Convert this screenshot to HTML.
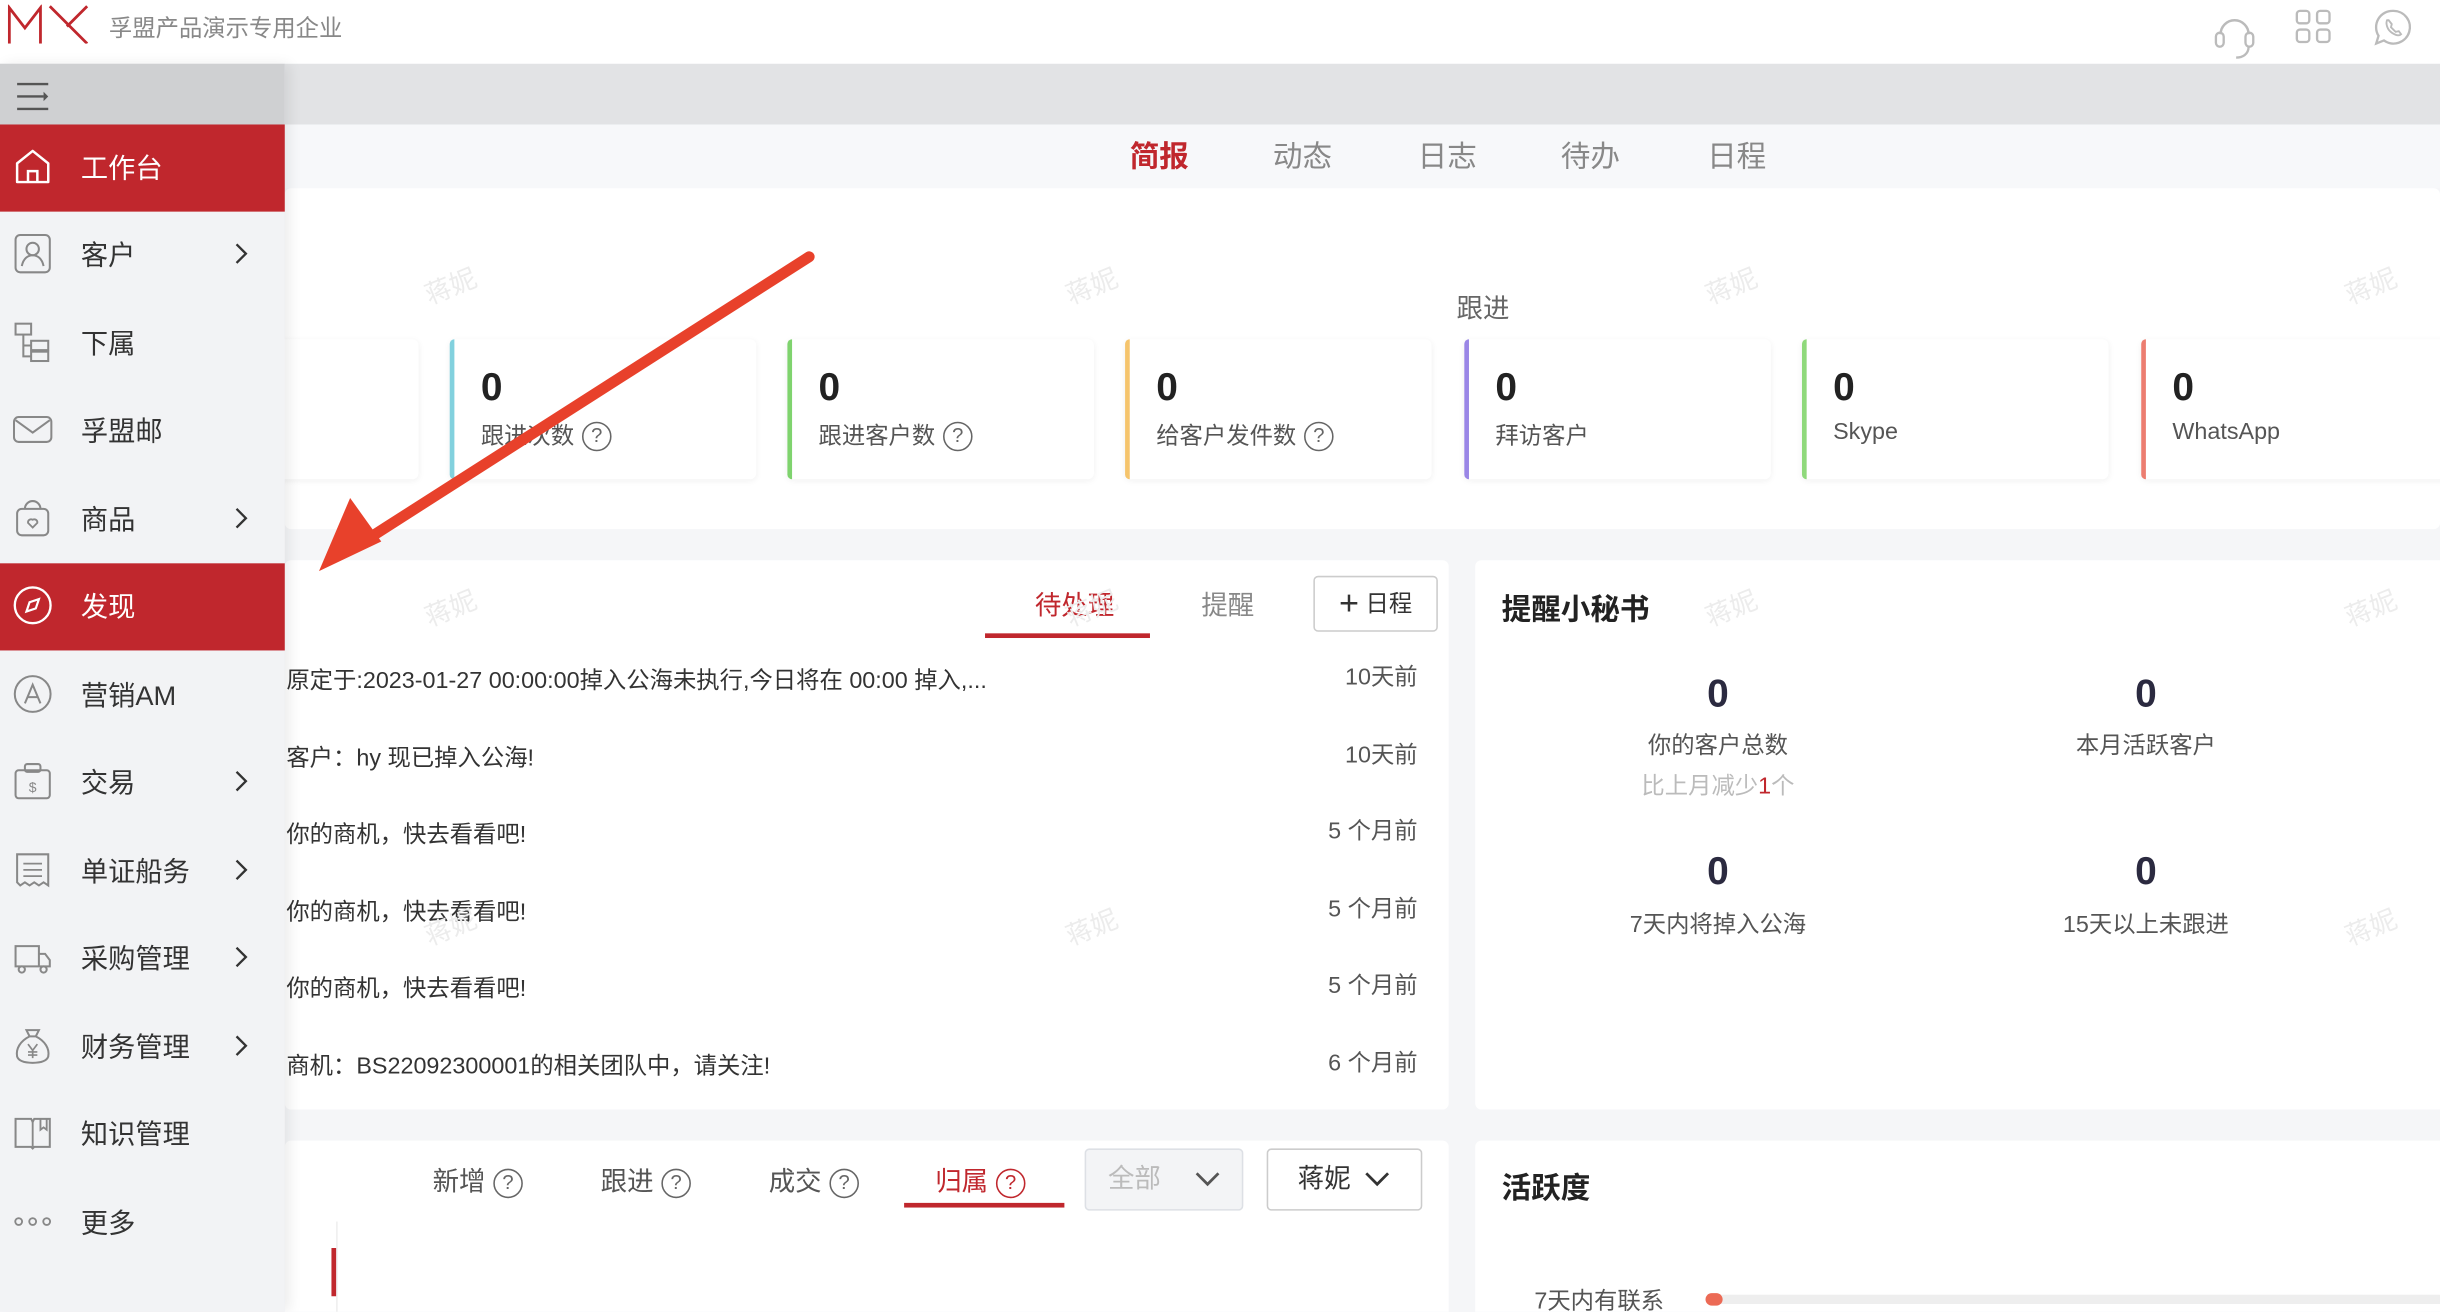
<!DOCTYPE html>
<html><head><meta charset="utf-8">
<style>
*{margin:0;padding:0;box-sizing:border-box}
html,body{width:2440px;height:1312px;overflow:hidden;background:#f5f6f8}
body{font-family:"Liberation Sans","Noto Sans CJK SC",sans-serif;color:#333}
#w{position:absolute;left:0;top:0;width:1568px;height:843px;transform:scale(1.556122);transform-origin:0 0;background:#f5f6f8;overflow:hidden}
.a{position:absolute}
.hdr{left:0;top:0;width:1568px;height:41px;background:#fff}
.gbar{left:0;top:41px;width:1568px;height:39px;background:#e2e3e5}
.tabs{left:183px;top:80px;width:1385px;height:41px;background:#f7f8fa}
.tab{position:absolute;top:86px;font-size:19px;color:#888}
.panel{background:#fff;border-radius:4px}
.card{position:absolute;top:218px;height:90px;width:197px;background:#fff;border-radius:4px;box-shadow:0 1px 4px rgba(0,0,0,.06)}
.card .bd{position:absolute;left:0;top:0;bottom:0;width:3px;border-radius:3px 0 0 3px}
.card .n{position:absolute;left:20px;top:17px;font-size:25px;font-weight:bold;color:#222}
.card .l{position:absolute;left:20px;top:51px;font-size:15px;color:#555}
.q{display:inline-block;width:19px;height:19px;border:1.3px solid #666;border-radius:50%;font-size:13px;line-height:16px;text-align:center;vertical-align:1px;margin-left:5px;color:#666}
.side{left:0;top:41px;width:183px;height:802px;background:#f2f3f5;box-shadow:3px 0 8px rgba(0,0,0,.08)}
.sbar{left:0;top:41px;width:183px;height:39px;background:#cfd0d2}
.it{position:absolute;left:0;width:183px;height:56px}
.it .t{position:absolute;left:52px;top:15px;font-size:17.5px;color:#333}
.it .ic{position:absolute;left:8px;top:14px;width:26px;height:26px}
.it .ch{position:absolute;left:150px;top:18px;width:10px;height:18px}
.it.on{background:#c0272d}
.it.on .t{color:#fff}
.row{position:absolute;left:184px;font-size:15px;color:#333;white-space:nowrap}
.tm{position:absolute;right:657px;font-size:15px;color:#555;text-align:right;width:120px}
.wm{position:absolute;font-size:17px;color:#ececec;transform:rotate(-22deg)}
.ctr{position:absolute;text-align:center;width:240px}
</style></head><body>
<div id="w">
<div class="a hdr"></div>
<svg class="a" style="left:5px;top:3px" width="52" height="25" viewBox="0 0 52 25"><path d="M1 25V2l10 13 10-13v23" fill="none" stroke="#c0272d" stroke-width="1.8"/><path d="M27 1l24 24M51 1L38 14" fill="none" stroke="#c0272d" stroke-width="1.8"/></svg>
<div class="a" style="left:70px;top:7px;font-size:15px;color:#888">孚盟产品演示专用企业</div>
<svg class="a" style="left:1422px;top:4px" width="28" height="40" viewBox="0 0 28 40"><path d="M5 18a9 9 0 0 1 18 0" fill="none" stroke="#bbb" stroke-width="1.6"/><rect x="2" y="17" width="5" height="9" rx="2.5" fill="none" stroke="#bbb" stroke-width="1.5"/><rect x="21" y="17" width="5" height="9" rx="2.5" fill="none" stroke="#bbb" stroke-width="1.5"/><path d="M23 26c0 5-4 7-8 7" fill="none" stroke="#bbb" stroke-width="1.5"/></svg>
<svg class="a" style="left:1474px;top:5px" width="26" height="36" viewBox="0 0 26 36"><rect x="2" y="2" width="8" height="8" rx="2" fill="none" stroke="#bbb" stroke-width="1.5"/><rect x="15" y="2" width="8" height="8" rx="2" fill="none" stroke="#bbb" stroke-width="1.5"/><rect x="2" y="14" width="8" height="8" rx="2" fill="none" stroke="#bbb" stroke-width="1.5"/><rect x="15" y="14" width="8" height="8" rx="2" fill="none" stroke="#bbb" stroke-width="1.5"/></svg>
<svg class="a" style="left:1524px;top:5px" width="28" height="36" viewBox="0 0 28 36"><path d="M14 2a10.5 10.5 0 1 1-6 19l-5 2 1.5-5A10.5 10.5 0 0 1 14 2z" fill="none" stroke="#bbb" stroke-width="1.5"/><path d="M10 8c-1 2 0 6 3 8s5 2 6 1l-1.5-2-2 .5-3-3 .5-2-2-2.5z" fill="none" stroke="#bbb" stroke-width="1.2"/></svg>

<div class="a gbar"></div>
<div class="a tabs"></div>
<div class="tab" style="left:726px;color:#c0272d;font-weight:bold">简报</div>
<div class="tab" style="left:818px">动态</div>
<div class="tab" style="left:911px">日志</div>
<div class="tab" style="left:1003px">待办</div>
<div class="tab" style="left:1097px">日程</div>

<div class="a panel" style="left:183px;top:121px;width:1385px;height:219px"></div>
<div class="a" style="left:936px;top:184px;font-size:17px;color:#666">跟进</div>
<div class="card" style="left:72px"></div>
<div class="card" style="left:289px"><div class="bd" style="background:#82d1de"></div><div class="n">0</div><div class="l">跟进次数<span class="q">?</span></div></div>
<div class="card" style="left:506px"><div class="bd" style="background:#7fd36e"></div><div class="n">0</div><div class="l">跟进客户数<span class="q">?</span></div></div>
<div class="card" style="left:723px"><div class="bd" style="background:#f5c46c"></div><div class="n">0</div><div class="l">给客户发件数<span class="q">?</span></div></div>
<div class="card" style="left:941px"><div class="bd" style="background:#9a86e6"></div><div class="n">0</div><div class="l">拜访客户</div></div>
<div class="card" style="left:1158px"><div class="bd" style="background:#8fd97b"></div><div class="n">0</div><div class="l">Skype</div></div>
<div class="card" style="left:1376px;width:210px"><div class="bd" style="background:#ec7d70"></div><div class="n">0</div><div class="l">WhatsApp</div></div>

<div class="a panel" style="left:183px;top:360px;width:748px;height:353px"></div>
<div class="a" style="left:665px;top:375px;font-size:17px;color:#c0272d">待处理</div>
<div class="a" style="left:633px;top:407px;width:106px;height:3px;background:#c0272d"></div>
<div class="a" style="left:772px;top:375px;font-size:17px;color:#888">提醒</div>
<div class="a" style="left:844px;top:370px;width:80px;height:36px;border:1px solid #ccc;border-radius:3px;font-size:15px;color:#333;line-height:34px;text-align:center"><span style="font-size:22px;font-weight:300;vertical-align:-2px">+</span> 日程</div>
<div class="row" style="top:426px">原定于:2023-01-27 00:00:00掉入公海未执行,今日将在 00:00 掉入,...</div>
<div class="row" style="top:476px">客户：hy 现已掉入公海!</div>
<div class="row" style="top:525px">你的商机，快去看看吧!</div>
<div class="row" style="top:575px">你的商机，快去看看吧!</div>
<div class="row" style="top:624px">你的商机，快去看看吧!</div>
<div class="row" style="top:674px">商机：BS22092300001的相关团队中，请关注!</div>
<div class="tm" style="top:424px">10天前</div>
<div class="tm" style="top:474px">10天前</div>
<div class="tm" style="top:523px">5 个月前</div>
<div class="tm" style="top:573px">5 个月前</div>
<div class="tm" style="top:622px">5 个月前</div>
<div class="tm" style="top:672px">6 个月前</div>

<div class="a panel" style="left:948px;top:360px;width:640px;height:353px"></div>
<div class="a" style="left:965px;top:377px;font-size:19px;font-weight:bold;color:#222">提醒小秘书</div>
<div class="ctr" style="left:984px;top:432px;font-size:25px;font-weight:bold;color:#2b2a40">0</div>
<div class="ctr" style="left:984px;top:468px;font-size:15px;color:#555">你的客户总数</div>
<div class="ctr" style="left:984px;top:494px;font-size:15px;color:#bbb">比上月减少<span style="color:#c0272d">1</span>个</div>
<div class="ctr" style="left:1259px;top:432px;font-size:25px;font-weight:bold;color:#2b2a40">0</div>
<div class="ctr" style="left:1259px;top:468px;font-size:15px;color:#555">本月活跃客户</div>
<div class="ctr" style="left:984px;top:546px;font-size:25px;font-weight:bold;color:#2b2a40">0</div>
<div class="ctr" style="left:984px;top:583px;font-size:15px;color:#555">7天内将掉入公海</div>
<div class="ctr" style="left:1259px;top:546px;font-size:25px;font-weight:bold;color:#2b2a40">0</div>
<div class="ctr" style="left:1259px;top:583px;font-size:15px;color:#555">15天以上未跟进</div>

<div class="a panel" style="left:183px;top:733px;width:748px;height:120px"></div>
<div class="a" style="left:278px;top:745px;font-size:17px;color:#555">新增<span class="q">?</span></div>
<div class="a" style="left:386px;top:745px;font-size:17px;color:#555">跟进<span class="q">?</span></div>
<div class="a" style="left:494px;top:745px;font-size:17px;color:#555">成交<span class="q">?</span></div>
<div class="a" style="left:601px;top:745px;font-size:17px;color:#c0272d">归属<span class="q" style="border-color:#c0272d;color:#c0272d">?</span></div>
<div class="a" style="left:581px;top:773px;width:103px;height:3px;background:#c0272d"></div>
<div class="a" style="left:697px;top:738px;width:102px;height:40px;background:#f3f4f6;border:1px solid #dde0e5;border-radius:3px;font-size:17px;color:#bbb;line-height:38px;padding-left:14px">全部<svg style="position:absolute;left:70px;top:14px" width="16" height="10" viewBox="0 0 16 10"><path d="M1 1l7 7 7-7" fill="none" stroke="#555" stroke-width="1.8"/></svg></div>
<div class="a" style="left:814px;top:738px;width:100px;height:40px;background:#fff;border:1px solid #ccc;border-radius:3px;font-size:17px;color:#333;line-height:38px;padding-left:19px">蒋妮<svg style="position:absolute;left:62px;top:14px" width="16" height="10" viewBox="0 0 16 10"><path d="M1 1l7 7 7-7" fill="none" stroke="#333" stroke-width="1.8"/></svg></div>
<div class="a" style="left:216px;top:785px;width:1px;height:60px;background:#eee"></div>
<div class="a" style="left:213px;top:802px;width:3px;height:31px;background:#c0272d"></div>

<div class="a panel" style="left:948px;top:733px;width:640px;height:120px"></div>
<div class="a" style="left:965px;top:749px;font-size:19px;font-weight:bold;color:#222">活跃度</div>
<div class="a" style="left:986px;top:825px;font-size:15px;color:#555">7天内有联系</div>
<div class="a" style="left:1096px;top:832px;width:480px;height:6px;background:#eee;border-radius:3px"></div>
<div class="a" style="left:1096px;top:831px;width:11px;height:8px;background:#ec6a55;border-radius:4px"></div>

<div class="wm" style="left:272px;top:170px">蒋妮</div>
<div class="wm" style="left:684px;top:170px">蒋妮</div>
<div class="wm" style="left:1095px;top:170px">蒋妮</div>
<div class="wm" style="left:1506px;top:170px">蒋妮</div>
<div class="wm" style="left:272px;top:377px">蒋妮</div>
<div class="wm" style="left:684px;top:377px">蒋妮</div>
<div class="wm" style="left:1095px;top:377px">蒋妮</div>
<div class="wm" style="left:1506px;top:377px">蒋妮</div>
<div class="wm" style="left:684px;top:582px">蒋妮</div>
<div class="wm" style="left:272px;top:582px">蒋妮</div>
<div class="wm" style="left:1506px;top:582px">蒋妮</div>

<div class="a side"></div>
<div class="a sbar"></div>
<svg class="a" style="left:10px;top:52px" width="22" height="20" viewBox="0 0 22 20"><path d="M1 2h20M1 10h17M1 18h20" stroke="#555" stroke-width="1.5"/><path d="M18 7l3 3-3 3z" fill="#555"/></svg>

<div class="it on" style="top:80px"><svg class="ic" viewBox="0 0 26 26"><path d="M3 11L13 3l10 8v12H3z" fill="none" stroke="#fff" stroke-width="1.6" stroke-linejoin="round"/><path d="M10 23v-7h6v7" fill="none" stroke="#fff" stroke-width="1.6"/></svg><div class="t">工作台</div></div>
<div class="it" style="top:136px"><svg class="ic" viewBox="0 0 26 26"><rect x="2" y="1" width="22" height="24" rx="3" fill="none" stroke="#888" stroke-width="1.3"/><circle cx="13" cy="10" r="4" fill="none" stroke="#888" stroke-width="1.3"/><path d="M6 21c1-5 4-7 7-7s6 2 7 7" fill="none" stroke="#888" stroke-width="1.3"/></svg><div class="t">客户</div><svg class="ch" viewBox="0 0 10 18"><path d="M2 3l6 6-6 6" fill="none" stroke="#333" stroke-width="1.5"/></svg></div>
<div class="it" style="top:193px"><svg class="ic" viewBox="0 0 26 26"><rect x="2" y="1" width="10" height="7" fill="none" stroke="#888" stroke-width="1.3"/><rect x="12" y="12" width="11" height="6" fill="none" stroke="#888" stroke-width="1.3"/><rect x="12" y="19" width="11" height="6" fill="none" stroke="#888" stroke-width="1.3"/><path d="M7 8v14h5M7 15h5" fill="none" stroke="#888" stroke-width="1.3"/></svg><div class="t">下属</div></div>
<div class="it" style="top:249px"><svg class="ic" viewBox="0 0 26 26"><rect x="1" y="5" width="24" height="16" rx="3" fill="none" stroke="#888" stroke-width="1.3"/><path d="M2 7l11 8 11-8" fill="none" stroke="#888" stroke-width="1.3"/></svg><div class="t">孚盟邮</div></div>
<div class="it" style="top:306px"><svg class="ic" viewBox="0 0 26 26"><rect x="3" y="7" width="20" height="17" rx="3" fill="none" stroke="#888" stroke-width="1.3"/><path d="M8 7a5 5 0 0 1 10 0" fill="none" stroke="#888" stroke-width="1.3"/><path d="M13 19l-3-3a2 2 0 0 1 3-2 2 2 0 0 1 3 2z" fill="none" stroke="#888" stroke-width="1.2"/></svg><div class="t">商品</div><svg class="ch" viewBox="0 0 10 18"><path d="M2 3l6 6-6 6" fill="none" stroke="#333" stroke-width="1.5"/></svg></div>
<div class="it on" style="top:362px"><svg class="ic" viewBox="0 0 26 26"><circle cx="13" cy="13" r="11.5" fill="none" stroke="#fff" stroke-width="1.5"/><path d="M17 9l-2 6-6 2 2-6z" fill="none" stroke="#fff" stroke-width="1.4"/></svg><div class="t">发现</div></div>
<div class="it" style="top:419px"><svg class="ic" viewBox="0 0 26 26"><circle cx="13" cy="13" r="11.5" fill="none" stroke="#888" stroke-width="1.3"/><path d="M8 19l5-12 5 12M9.5 15h7" fill="none" stroke="#888" stroke-width="1.3"/></svg><div class="t">营销AM</div></div>
<div class="it" style="top:475px"><svg class="ic" viewBox="0 0 26 26"><rect x="2" y="6" width="22" height="18" rx="2" fill="none" stroke="#888" stroke-width="1.3"/><rect x="8" y="2" width="10" height="5" rx="1.5" fill="none" stroke="#888" stroke-width="1.3"/><text x="13" y="20" font-size="9" fill="#888" text-anchor="middle" font-family="Liberation Sans">$</text></svg><div class="t">交易</div><svg class="ch" viewBox="0 0 10 18"><path d="M2 3l6 6-6 6" fill="none" stroke="#333" stroke-width="1.5"/></svg></div>
<div class="it" style="top:532px"><svg class="ic" viewBox="0 0 26 26"><path d="M3 3h20v20l-3-2-3 2-3-2-3 2-3-2-3 2-2-2z" fill="none" stroke="#888" stroke-width="1.3"/><path d="M7 9h12M7 13h12M7 17h12" stroke="#888" stroke-width="1.1"/></svg><div class="t">单证船务</div><svg class="ch" viewBox="0 0 10 18"><path d="M2 3l6 6-6 6" fill="none" stroke="#333" stroke-width="1.5"/></svg></div>
<div class="it" style="top:588px"><svg class="ic" viewBox="0 0 26 26"><path d="M2 6h15v13H2zM17 11h4l3 4v4h-7" fill="none" stroke="#888" stroke-width="1.3"/><circle cx="6" cy="21" r="2" fill="#f2f3f5" stroke="#888" stroke-width="1.3"/><circle cx="20" cy="21" r="2" fill="#f2f3f5" stroke="#888" stroke-width="1.3"/></svg><div class="t">采购管理</div><svg class="ch" viewBox="0 0 10 18"><path d="M2 3l6 6-6 6" fill="none" stroke="#333" stroke-width="1.5"/></svg></div>
<div class="it" style="top:645px"><svg class="ic" viewBox="0 0 26 26"><path d="M9 3h8l-2 4h-4zM11 7C5 10 2 15 3 20c1 3 5 4 10 4s9-1 10-4c1-5-2-10-8-13" fill="none" stroke="#888" stroke-width="1.3"/><path d="M10 12l3 4 3-4M13 16v5M10 17h6M10 19h6" fill="none" stroke="#888" stroke-width="1.1"/></svg><div class="t">财务管理</div><svg class="ch" viewBox="0 0 10 18"><path d="M2 3l6 6-6 6" fill="none" stroke="#333" stroke-width="1.5"/></svg></div>
<div class="it" style="top:701px"><svg class="ic" viewBox="0 0 26 26"><path d="M2 4h10l1 2 1-2h10v18H14l-1 1-1-1H2z" fill="none" stroke="#888" stroke-width="1.3"/><path d="M13 6v16M18 4v7l2-1.5 2 1.5V4" fill="none" stroke="#888" stroke-width="1.2"/></svg><div class="t">知识管理</div></div>
<div class="it" style="top:758px"><svg class="ic" viewBox="0 0 26 26"><circle cx="4" cy="13" r="2.2" fill="none" stroke="#888" stroke-width="1.2"/><circle cx="13" cy="13" r="2.2" fill="none" stroke="#888" stroke-width="1.2"/><circle cx="22" cy="13" r="2.2" fill="none" stroke="#888" stroke-width="1.2"/></svg><div class="t">更多</div></div>

<svg class="a" style="left:0;top:0" width="1568" height="843" viewBox="0 0 1568 843"><path d="M520 165L240 344" stroke="#e8412b" stroke-width="7" stroke-linecap="round"/><path d="M205 367L225 320 245 348z" fill="#e8412b"/></svg>
</div>
</body></html>
